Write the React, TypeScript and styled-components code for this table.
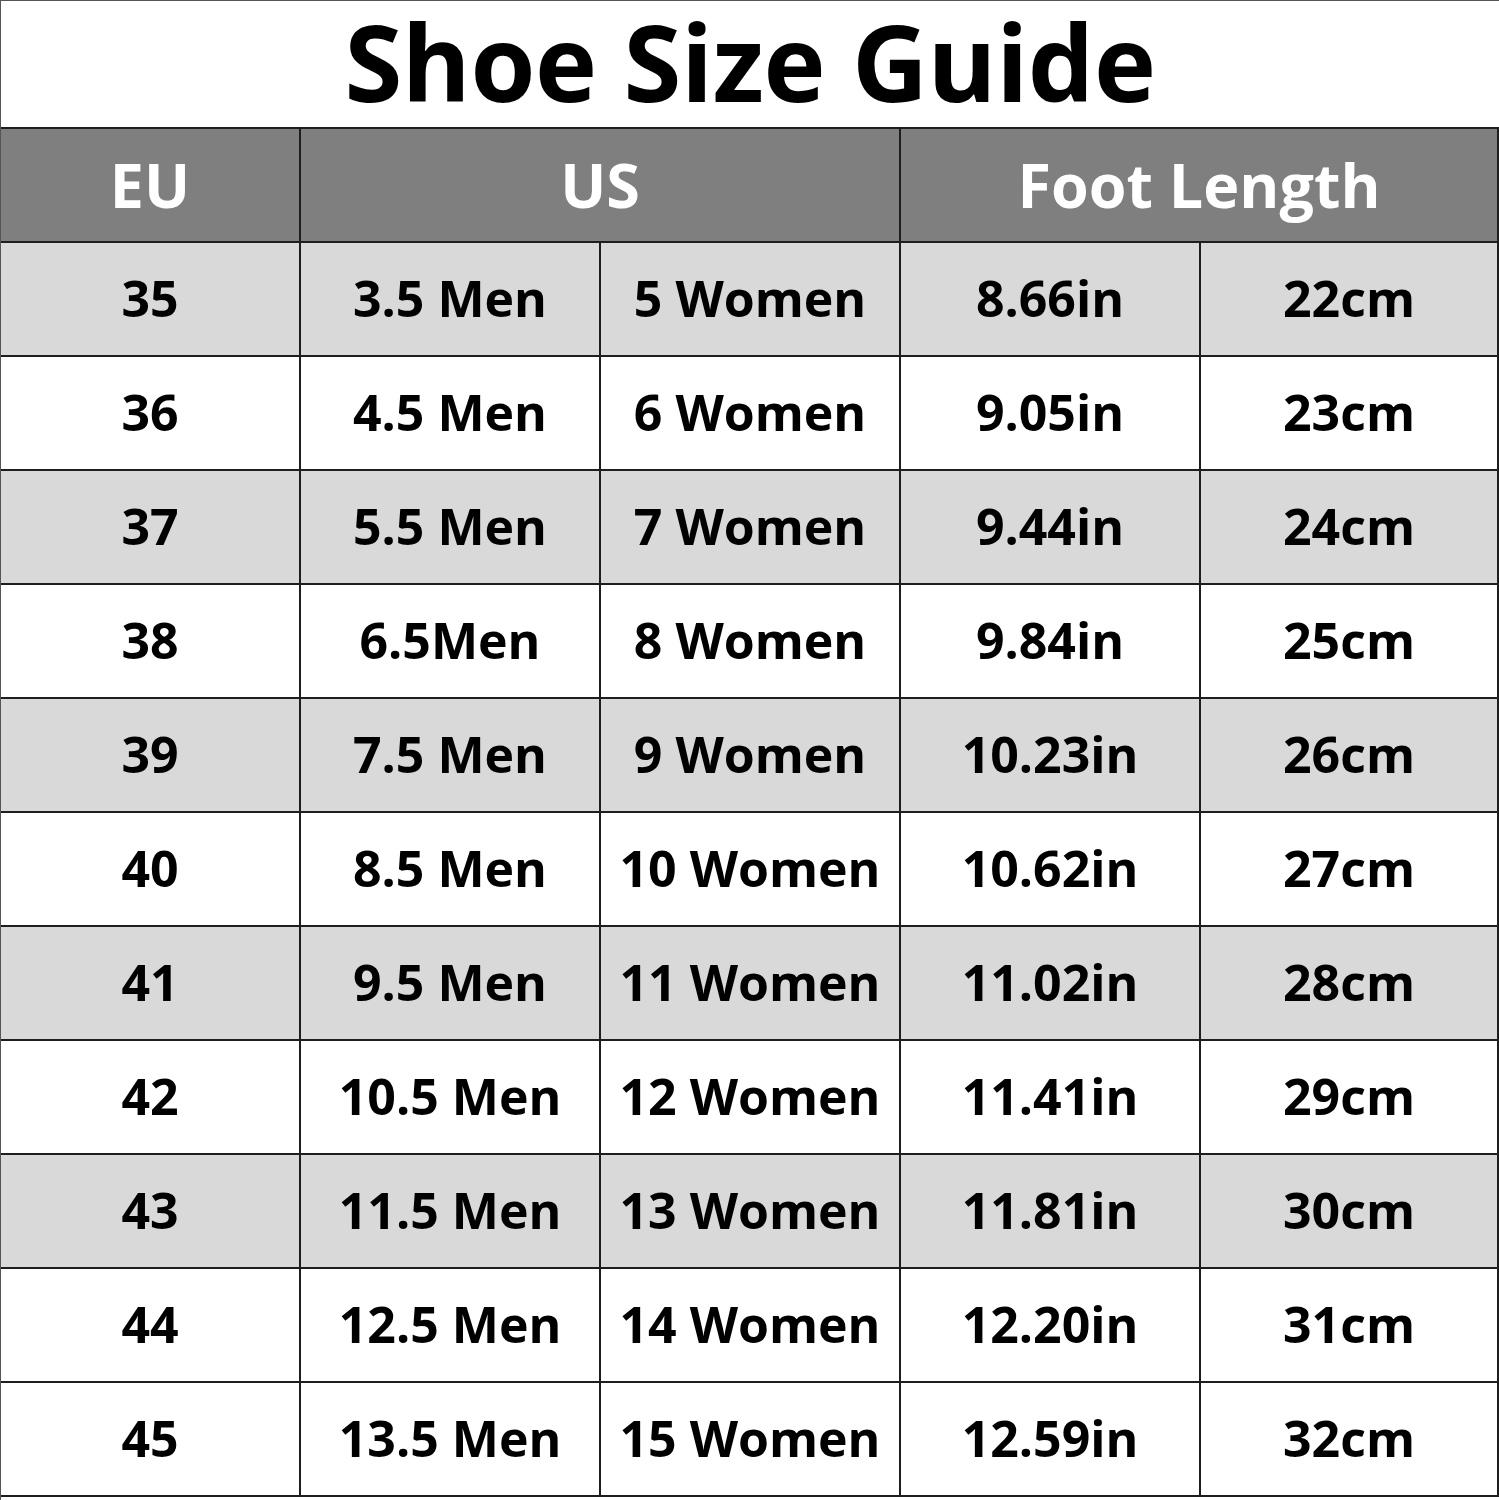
import React from "react";
import styled, { createGlobalStyle } from "styled-components";

const Global = createGlobalStyle`
  html, body { margin: 0; padding: 0; background: #ffffff; }
  body { font-family: "Open Sans", "Noto Sans", sans-serif; }
`;

const Page = styled.div`
  width: 1499px;
  height: 1500px;
  box-sizing: border-box;
  border-top: 1px solid #555;
  border-left: 1px solid #555;
  background: #ffffff;
  display: flex;
  flex-direction: column;
`;

const Title = styled.h1`
  margin: 0;
  height: 126px;
  display: flex;
  align-items: center;
  justify-content: center;
  font-family: "Open Sans", sans-serif;
  font-weight: 700;
  font-size: 105px;
  letter-spacing: -0.4px;
  color: #000;
  line-height: 1.1;
  padding-bottom: 4px;
  box-sizing: border-box;
`;

const Table = styled.div`
  display: grid;
  grid-template-columns: 298px 298px 298px 298px 296px;
  grid-auto-rows: 112px;
  gap: 2px;
  background: #1e1e1e;
  border-top: 2px solid #1e1e1e;
  border-right: 2px solid #1e1e1e;
  border-bottom: 2px solid #1e1e1e;
  width: 1498px;
  box-sizing: border-box;
`;

const HeadCell = styled.div<{ $span: number }>`
  grid-column: span ${(p) => p.$span};
  background: #7f7f7f;
  color: #ffffff;
  display: flex;
  align-items: center;
  justify-content: center;
  font-weight: 700;
  font-size: 61px;
  padding-bottom: 2px;
`;

const Cell = styled.div<{ $shade: boolean }>`
  background: ${(p) => (p.$shade ? "#d9d9d9" : "#ffffff")};
  color: #000;
  display: flex;
  align-items: center;
  justify-content: center;
  font-weight: 700;
  font-size: 50px;
  padding-bottom: 2px;
`;

const rows: [string, string, string, string, string][] = [
  ["35", "3.5 Men", "5 Women", "8.66in", "22cm"],
  ["36", "4.5 Men", "6 Women", "9.05in", "23cm"],
  ["37", "5.5 Men", "7 Women", "9.44in", "24cm"],
  ["38", "6.5Men", "8 Women", "9.84in", "25cm"],
  ["39", "7.5 Men", "9 Women", "10.23in", "26cm"],
  ["40", "8.5 Men", "10 Women", "10.62in", "27cm"],
  ["41", "9.5 Men", "11 Women", "11.02in", "28cm"],
  ["42", "10.5 Men", "12 Women", "11.41in", "29cm"],
  ["43", "11.5 Men", "13 Women", "11.81in", "30cm"],
  ["44", "12.5 Men", "14 Women", "12.20in", "31cm"],
  ["45", "13.5 Men", "15 Women", "12.59in", "32cm"],
];

const shaded = (i: number) => i < 9 && i % 2 === 0;

export default function App() {
  return (
    <Page>
      <Global />
      <Title>Shoe Size Guide</Title>
      <Table>
        <HeadCell $span={1}>EU</HeadCell>
        <HeadCell $span={2}>US</HeadCell>
        <HeadCell $span={2}>Foot Length</HeadCell>
        {rows.map((r, i) =>
          r.map((v, j) => (
            <Cell key={`${i}-${j}`} $shade={shaded(i)}>
              {v}
            </Cell>
          ))
        )}
      </Table>
    </Page>
  );
}
